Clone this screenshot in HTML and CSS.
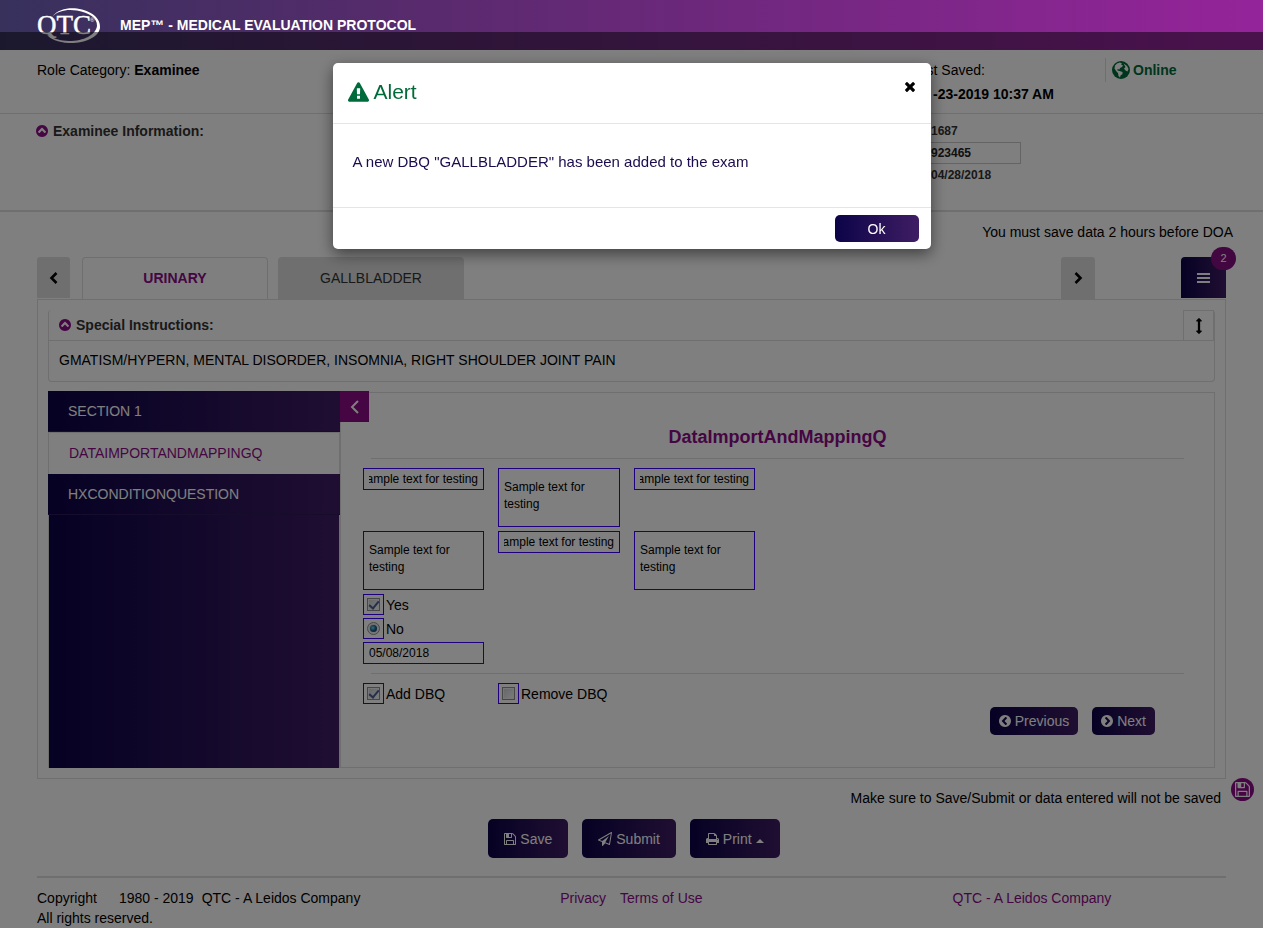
FILE: index.html
```html
<!DOCTYPE html>
<html lang="en">
<head>
<meta charset="utf-8">
<title>MEP - Medical Evaluation Protocol</title>
<link rel="stylesheet" href="styles.css">
</head>
<body>
<svg class="sprite" aria-hidden="true">
  <symbol id="i-circle-up" viewBox="128 128 1536 1536"><path d="M1293 1139l102-102q19-19 19-45t-19-45l-454-454q-19-19-45-19t-45 19l-454 454q-19 19-19 45t19 45l102 102q19 19 45 19t45-19l307-307 307 307q19 19 45 19t45-19zm371-243q0 209-103 385.5t-279.5 279.5-385.5 103-385.5-103-279.5-279.5-103-385.5 103-385.5 279.5-279.5 385.5-103 385.5 103 279.5 279.5 103 385.5z"/></symbol>
  <symbol id="i-circle-left" viewBox="128 128 1536 1536"><path transform="rotate(-90 896 896)" d="M1293 1139l102-102q19-19 19-45t-19-45l-454-454q-19-19-45-19t-45 19l-454 454q-19 19-19 45t19 45l102 102q19 19 45 19t45-19l307-307 307 307q19 19 45 19t45-19zm371-243q0 209-103 385.5t-279.5 279.5-385.5 103-385.5-103-279.5-279.5-103-385.5 103-385.5 279.5-279.5 385.5-103 385.5 103 279.5 279.5 103 385.5z"/></symbol>
  <symbol id="i-circle-right" viewBox="128 128 1536 1536"><path transform="rotate(90 896 896)" d="M1293 1139l102-102q19-19 19-45t-19-45l-454-454q-19-19-45-19t-45 19l-454 454q-19 19-19 45t19 45l102 102q19 19 45 19t45-19l307-307 307 307q19 19 45 19t45-19zm371-243q0 209-103 385.5t-279.5 279.5-385.5 103-385.5-103-279.5-279.5-103-385.5 103-385.5 279.5-279.5 385.5-103 385.5 103 279.5 279.5 103 385.5z"/></symbol>
  <symbol id="i-floppy" viewBox="128 128 1536 1536"><path d="M512 1536h768v-384h-768v384zm896 0h128v-896q0-14-10-38.5t-20-34.5l-281-281q-10-10-34-20t-39-10v416q0 40-28 68t-68 28h-576q-40 0-68-28t-28-68v-416h-128v1280h128v-416q0-40 28-68t68-28h832q40 0 68 28t28 68v416zm-384-928v-320q0-13-9.5-22.5t-22.5-9.5h-192q-13 0-22.5 9.5t-9.5 22.5v320q0 13 9.5 22.5t22.5 9.5h192q13 0 22.5-9.5t9.5-22.5zm640 32v928q0 40-28 68t-68 28h-1344q-40 0-68-28t-28-68v-1344q0-40 28-68t68-28h928q40 0 88 20t76 48l280 280q28 28 48 76t20 88z"/></symbol>
  <symbol id="i-plane" viewBox="0 0 1792 1792"><path d="M1764 11q33 24 27 64l-256 1536q-5 29-32 45-14 8-31 8-11 0-24-5l-527-215-298 327q-18 21-47 21-14 0-23-4-19-7-30-23.5t-11-36.5v-452l-472-193q-37-14-40-55-3-39 32-59l1664-960q35-21 68 2zm-342 1499l221-1323-1434 827 336 137 863-639-478 797z"/></symbol>
  <symbol id="i-print" viewBox="64 128 1664 1536"><path d="M448 1536h896v-256h-896v256zm0-640h896v-384h-160q-40 0-68-28t-28-68v-160h-640v640zm1152 64q0-26-19-45t-45-19-45 19-19 45 19 45 45 19 45-19 19-45zm128 0v416q0 13-9.5 22.5t-22.5 9.5h-224v160q0 40-28 68t-68 28h-960q-40 0-68-28t-28-68v-160h-224q-13 0-22.5-9.5t-9.5-22.5v-416q0-79 56.5-135.5t135.5-56.5h64v-544q0-40 28-68t68-28h672q40 0 88 20t76 48l152 152q28 28 48 76t20 88v256h64q79 0 135.5 56.5t56.5 135.5z"/></symbol>
  <symbol id="i-warning" viewBox="0 0 1792 1664"><path d="M1024 1375v-190q0-14-9.5-23.5t-22.5-9.5h-192q-13 0-22.5 9.5t-9.5 23.5v190q0 14 9.5 23.5t22.5 9.5h192q13 0 22.5-9.5t9.5-23.5zm-2-374l18-459q0-12-10-19-13-11-24-11h-220q-11 0-24 11-10 7-10 21l17 457q0 10 10 16.5t24 6.5h185q14 0 23.5-6.5t10.5-16.5zm-14-934l768 1408q35 63-2 126-17 29-46.5 46t-63.5 17h-1536q-34 0-63.5-17t-46.5-46q-37-63-2-126l768-1408q17-31 47-49t65-18 65 18 47 49z"/></symbol>
  <symbol id="i-times" viewBox="302 366 1188 1188"><path d="M1490 1322q0 40-28 68l-136 136q-28 28-68 28t-68-28l-294-294-294 294q-28 28-68 28t-68-28l-136-136q-28-28-28-68t28-68l294-294-294-294q-28-28-28-68t28-68l136-136q28-28 68-28t68 28l294 294 294-294q28-28 68-28t68 28l136 136q28 28 28 68t-28 68l-294 294 294 294q28 28 28 68z"/></symbol>
  <symbol id="i-updown" viewBox="0 0 1792 1792"><path d="M1216 320q0 26-19 45t-45 19h-128v1024h128q26 0 45 19t19 45-19 45l-256 256q-19 19-45 19t-45-19l-256-256q-19-19-19-45t19-45 45-19h128v-1024h-128q-26 0-45-19t-19-45 19-45l256-256q19-19 45-19t45 19l256 256q19 19 19 45z"/></symbol>
  <symbol id="i-globe" viewBox="0 0 18 18"><circle cx="9" cy="9" r="9"/><path class="land" d="M3 4.500 5 2.500 8 1.500 10 2.500 9 3.500 11 4.500 10 6 8 7 7.500 8.500 5.500 8 5.500 9.500 7.500 10 10.500 11 10.500 13 8.500 14.500 8 16.500 6.500 15 6 12 4.500 10.500 2.500 7.500ZM11.500 2.500 15 5 16.500 8 15.500 10.500 13.500 9.500 12 7.500 13.500 6Z"/></symbol>
</svg>

<header class="topbar">
  <svg class="logo" viewBox="0 0 66 38" role="img" aria-label="QTC">
    <path d="M16 11C22 3 32 1.500 41 2.500 55 4.500 65 12 64 22 62 32 48 37.500 33 37 22 36.500 14 33 11 28.500 18 33 24 34.800 33 35 48 35 59.500 29 61 20 61.500 12 53 6.500 41 4.500 31 3 22 4.500 16 11Z"/>
    <text class="mark" x="1" y="28">QTC</text>
    <text class="reg" x="54" y="16">®</text>
  </svg>
  <h1 class="product">MEP™ - MEDICAL EVALUATION PROTOCOL</h1>
</header>

<section class="status">
  <div>Role Category: <b>Examinee</b></div>
  <div>
    <div>Last Saved:</div>
    <b class="saved-at">-23-2019 10:37 AM</b>
  </div>
  <div><span class="online"><svg class="globe"><use href="#i-globe"/></svg>Online</span></div>
</section>

<section class="examinee">
  <h2 class="toggle-title"><svg class="i12"><use href="#i-circle-up"/></svg>Examinee Information:</h2>
  <div class="facts">
    <div class="fact">1687</div>
    <input class="fact-input" type="text" value="923465" aria-label="Examinee number">
    <div class="fact">04/28/2018</div>
  </div>
</section>

<p class="notice">You must save data 2 hours before DOA</p>

<main class="page">
  <nav class="tabs">
    <button class="arrow" type="button" aria-label="Previous tab"><svg class="chev" viewBox="0 0 12 12"><path d="M8.500 1 3.500 6l5 5"/></svg></button>
    <button class="tab active" type="button">URINARY</button>
    <button class="tab" type="button">GALLBLADDER</button>
    <button class="arrow next" type="button" aria-label="Next tab"><svg class="chev" viewBox="0 0 12 12"><path d="M3.500 1l5 5-5 5"/></svg></button>
    <button class="menu" type="button" aria-label="Menu"><svg class="bars" viewBox="0 0 13 10"><path d="M0 1h13M0 5h13M0 9h13"/></svg><span class="badge">2</span></button>
  </nav>

  <div class="panel">
    <section class="card">
      <div class="card-head">
        <h2 class="toggle-title"><svg class="i12"><use href="#i-circle-up"/></svg>Special Instructions:</h2>
        <button class="resize" type="button" aria-label="Resize"><svg class="i16"><use href="#i-updown"/></svg></button>
      </div>
      <p class="card-body">GMATISM/HYPERN, MENTAL DISORDER, INSOMNIA, RIGHT SHOULDER JOINT PAIN</p>
    </section>

    <div class="workspace">
      <nav class="sidebar">
        <a class="item" href="#">SECTION 1</a>
        <a class="item current" href="#">DATAIMPORTANDMAPPINGQ</a>
        <a class="item" href="#">HXCONDITIONQUESTION</a>
      </nav>
      <section class="content">
        <button class="collapse" type="button" aria-label="Collapse sections"><svg class="chev thin" viewBox="0 0 14 14"><path d="M10 1 4 7l6 6"/></svg></button>
        <h2 class="title">DataImportAndMappingQ</h2>
        <hr class="rule">
        <form class="form">
          <div class="fields texts">
            <input class="field tail" type="text" value="Sample text for testing" aria-label="Text 1">
            <textarea class="field area" aria-label="Text 2">Sample text for testing</textarea>
            <input class="field tail" type="text" value="Sample text for testing" aria-label="Text 3">
            <textarea class="field area" aria-label="Text 4">Sample text for testing</textarea>
            <input class="field tail" type="text" value="Sample text for testing" aria-label="Text 5">
            <textarea class="field area" aria-label="Text 6">Sample text for testing</textarea>
          </div>
          <label class="choice"><span class="frame"><input class="check" type="checkbox" checked></span>Yes</label>
          <label class="choice"><span class="frame"><input class="radio" type="radio" checked></span>No</label>
          <input class="field date" type="text" value="05/08/2018" aria-label="Date">
          <hr class="rule">
          <div class="fields">
            <label class="choice"><span class="frame"><input class="check" type="checkbox" checked></span>Add DBQ</label>
            <label class="choice"><span class="frame"><input class="check" type="checkbox"></span>Remove DBQ</label>
          </div>
          <div class="pager">
            <button class="btn" type="button"><svg class="i12"><use href="#i-circle-left"/></svg>Previous</button>
            <button class="btn" type="button"><svg class="i12"><use href="#i-circle-right"/></svg>Next</button>
          </div>
        </form>
      </section>
    </div>
    <button class="quick-save" type="button" aria-label="Quick save"><svg class="i15"><use href="#i-floppy"/></svg></button>
  </div>

  <p class="reminder">Make sure to Save/Submit or data entered will not be saved</p>
  <div class="actions">
    <button class="btn big" type="button"><svg class="i12"><use href="#i-floppy"/></svg>Save</button>
    <button class="btn big" type="button"><svg class="i14"><use href="#i-plane"/></svg>Submit</button>
    <button class="btn big" type="button"><svg class="i13"><use href="#i-print"/></svg>Print<span class="caret"></span></button>
  </div>

  <footer class="footer">
    <div>
      <div class="copy"><span>Copyright</span><span class="years">1980 - 2019</span><span>QTC - A Leidos Company</span></div>
      <div>All rights reserved.</div>
    </div>
    <div class="links"><a href="#">Privacy</a><a href="#">Terms of Use</a></div>
    <div><a href="#">QTC - A Leidos Company</a></div>
  </footer>
</main>

<div class="backdrop">
  <div class="modal" role="alertdialog" aria-labelledby="alert-title">
    <div class="modal-head">
      <h2 class="modal-title" id="alert-title"><svg class="warn"><use href="#i-warning"/></svg>Alert</h2>
      <button class="close" type="button" aria-label="Close"><svg class="i10"><use href="#i-times"/></svg></button>
    </div>
    <p class="modal-body">A new DBQ "GALLBLADDER" has been added to the exam</p>
    <div class="modal-foot"><button class="btn ok" type="button">Ok</button></div>
  </div>
</div>
</body>
</html>
```

FILE: styles.css
```css
:root {
  --line: #dedede;
  --purple: #8c0a87;
  --green: #006b3a;
  --dark: linear-gradient(to right, #0c0448, #3f1d64);
}
* { box-sizing: border-box; }
body {
  margin: 0;
  background: #fff;
  color: #000;
  font: 14px/20px "Liberation Sans", Arial, sans-serif;
}
h1, h2, p { margin: 0; font-size: 14px; }
button, input, textarea { font: inherit; margin: 0; }
button { border: 0; padding: 0; cursor: pointer; }
a { color: var(--purple); text-decoration: none; }
svg { display: block; flex: none; fill: currentColor; }
.sprite { position: absolute; width: 0; height: 0; }
.i10 { width: 10px; height: 10px; }
.i12 { width: 12px; height: 12px; }
.i13 { width: 13px; height: 12px; }
.i14 { width: 14px; height: 14px; }
.i15 { width: 15px; height: 15px; }
.i16 { width: 16px; height: 16px; }

.topbar {
  display: flex;
  align-items: center;
  gap: 18px;
  height: 50px;
  padding: 0 36px;
  background: linear-gradient(to right, #37315c, #5a2a6e 35%, #95249a);
  color: #fff;
}
.logo { width: 66px; height: 38px; }
.mark { font: 27px "Liberation Serif", serif; stroke: #fff; stroke-width: 0.4; }
.reg { font: 6px "Liberation Sans", sans-serif; }

.status, .examinee {
  display: grid;
  grid-template-columns: 1fr 194px 121px;
  padding: 8px 37px 7px;
  line-height: 24px;
  border-bottom: 1px solid var(--line);
}
.saved-at { padding-left: 22px; }
.online {
  display: flex;
  align-items: center;
  gap: 3px;
  padding-left: 6px;
  border-left: 1px solid var(--line);
  color: var(--green);
  font-weight: bold;
}
.globe { width: 18px; height: 18px; }
.land { fill: #fff; }

.examinee {
  align-items: start;
  padding: 6px 36px 24px;
  line-height: 22px;
  border-bottom-width: 2px;
}
.toggle-title { display: flex; align-items: center; gap: 5px; color: #333; }
.toggle-title svg { color: var(--purple); }
.facts { color: #333; font-size: 12px; font-weight: bold; }
.fact { height: 22px; padding-left: 19px; }
.fact-input {
  display: block;
  width: 109px;
  height: 22px;
  padding: 0 0 0 18px;
  border: 1px solid #c8c8c8;
  background: transparent;
  color: #222;
}

.notice { padding: 10px 30px 15px; text-align: right; }
.page { padding: 0 37px; }

.tabs { display: flex; height: 42px; }
.arrow {
  display: flex;
  align-items: center;
  justify-content: center;
  width: 33px;
  height: 41px;
  margin-right: 12px;
  border-radius: 3px 3px 0 0;
  background: #dedede;
}
.arrow.next { width: 34px; height: 42px; margin: 0 86px 0 auto; }
.chev { width: 12px; height: 12px; fill: none; stroke: #000; stroke-width: 2.6; }
.chev.thin { width: 14px; height: 14px; stroke: #fff; stroke-width: 2; }
.tab {
  width: 186px;
  margin-right: 10px;
  border-radius: 4px 4px 0 0;
  background: #dedede;
  color: #333;
}
.tab.active {
  padding-bottom: 1px;
  border: 1px solid var(--line);
  border-bottom: 0;
  background: #fff;
  color: var(--purple);
  font-weight: bold;
}
.menu {
  position: relative;
  display: flex;
  align-items: center;
  justify-content: center;
  width: 45px;
  height: 41px;
  border-radius: 4px 0 0 0;
  background: var(--dark);
}
.bars { width: 13px; height: 10px; stroke: #fff; stroke-width: 2; }
.badge {
  position: absolute;
  top: -10px;
  right: -10px;
  width: 25px;
  height: 23px;
  border-radius: 12px;
  background: #850c82;
  color: #fff;
  font-size: 11px;
  line-height: 23px;
}

.panel { position: relative; padding: 10px; border: 1px solid var(--line); }
.card { margin-bottom: 9px; border: 1px solid var(--line); border-top: 0; border-radius: 4px; }
.card-head {
  display: flex;
  justify-content: space-between;
  padding-left: 10px;
  border-bottom: 1px solid var(--line);
}
.resize {
  display: flex;
  align-items: center;
  justify-content: center;
  width: 31px;
  height: 30px;
  border: 1px solid var(--line);
  border-bottom: 0;
  background: #fff;
  color: #000;
}
.card-body { padding: 9px 10px 11px; }

.workspace { display: flex; }
.sidebar {
  width: 292px;
  border: 1px solid var(--line);
  border-top: 0;
  border-bottom: 0;
  background: var(--dark);
}
.item {
  display: block;
  margin: 0 -1px;
  padding: 10px 20px;
  border-bottom: 1px solid #2c1a55;
  background: var(--dark);
  color: #fff;
}
.item.current {
  padding: 10px 20px 11px;
  border: 1px solid var(--line);
  border-bottom: 0;
  background: #fff;
  color: var(--purple);
}
.content {
  position: relative;
  flex: 1;
  margin-top: 1px;
  padding: 32px 22px;
  border: 1px solid var(--line);
}
.collapse {
  position: absolute;
  top: -2px;
  left: -1px;
  display: flex;
  align-items: center;
  justify-content: center;
  width: 29px;
  height: 31px;
  background: var(--purple);
}
.title { color: var(--purple); font-size: 18px; line-height: 24px; text-align: center; }
.rule { width: auto; margin: 9px 8px; border: 0; border-top: 1px solid var(--line); }

.form { display: flex; flex-direction: column; gap: 3px; }
.form .rule { margin: 6px 8px; }
.fields {
  display: grid;
  grid-template-columns: 121px 122px 121px;
  gap: 4px 14px;
  align-items: start;
}
.fields.texts { padding-bottom: 1px; }
.field {
  display: block;
  width: 100%;
  height: 22px;
  padding: 0 5px;
  border: 1px solid #3c00ff;
  background: #fff;
  color: #000;
  font-size: 12px;
}
.field.tail { direction: rtl; }
.field.area { height: 59px; padding: 10px 5px 0; line-height: 17px; resize: none; overflow: hidden; }
.field.date { width: 121px; }
.choice { display: flex; align-items: center; gap: 2px; height: 21px; white-space: nowrap; }
.frame {
  display: flex;
  align-items: center;
  justify-content: center;
  width: 21px;
  height: 21px;
  border: 1px solid #3c00ff;
}
.check, .radio {
  appearance: none;
  display: flex;
  justify-content: center;
  width: 13px;
  height: 13px;
  border: 1px solid #8e8f8f;
  background: linear-gradient(135deg, #c8ccd2, #fafafa);
  box-shadow: inset 0 0 0 1px #eee;
}
.check:checked::before {
  content: "";
  width: 4px;
  height: 8px;
  border: solid #4a5f97;
  border-width: 0 2px 2px 0;
  transform: rotate(40deg);
}
.radio { align-items: center; border-radius: 50%; }
.radio:checked::before {
  content: "";
  width: 7px;
  height: 7px;
  border-radius: 50%;
  background: radial-gradient(circle at 40% 40%, #7fd2f5, #14608c 50%, #0b2f50);
}

.btn {
  display: flex;
  align-items: center;
  justify-content: center;
  gap: 4px;
  height: 28px;
  padding: 0 9px;
  border-radius: 5px;
  background: var(--dark);
  color: #fff;
}
.btn.big { height: 39px; padding: 0 16px; }
.pager { display: flex; justify-content: flex-end; gap: 14px; padding-right: 37px; }
.caret { margin-top: 5px; border: 4px solid transparent; border-top: 0; border-bottom-color: #fff; }
.quick-save {
  position: absolute;
  right: -29px;
  bottom: -23px;
  display: flex;
  align-items: center;
  justify-content: center;
  width: 23px;
  height: 23px;
  border-radius: 50%;
  background: var(--purple);
  color: #fff;
}

.reminder { padding: 9px 5px 11px; text-align: right; }
.actions { display: flex; justify-content: center; gap: 14px; padding: 0 0 18px 5px; }
.footer {
  display: grid;
  grid-template-columns: 44fr 33fr 23fr;
  padding-top: 10px;
  border-top: 2px solid var(--line);
}
.copy { display: flex; }
.years { margin: 0 8px 0 22px; }
.links { display: flex; gap: 14px; }

.backdrop {
  position: fixed;
  inset: 32px 0 0;
  padding: 31px 20px;
  background: rgba(0, 0, 0, 0.5);
}
.modal {
  max-width: 598px;
  margin: 0 auto;
  border-radius: 5px;
  background: #fff;
  box-shadow: 0 5px 15px rgba(0, 0, 0, 0.5);
}
.modal-head {
  display: flex;
  justify-content: space-between;
  align-items: flex-start;
  padding: 14px 15px 16px;
  border-bottom: 1px solid #e5e5e5;
}
.modal-title {
  display: flex;
  align-items: center;
  gap: 5px;
  color: var(--green);
  font-size: 21px;
  font-weight: normal;
  line-height: 30px;
}
.warn { width: 21px; height: 20px; }
.close { padding: 5px 1px; background: transparent; color: #000; }
.modal-body { padding: 28px 20px 35px; color: #1c0c4e; font-size: 15px; }
.modal-foot {
  display: flex;
  justify-content: flex-end;
  padding: 7px 12px;
  border-top: 1px solid #e5e5e5;
}
.btn.ok { width: 84px; height: 27px; }
```
